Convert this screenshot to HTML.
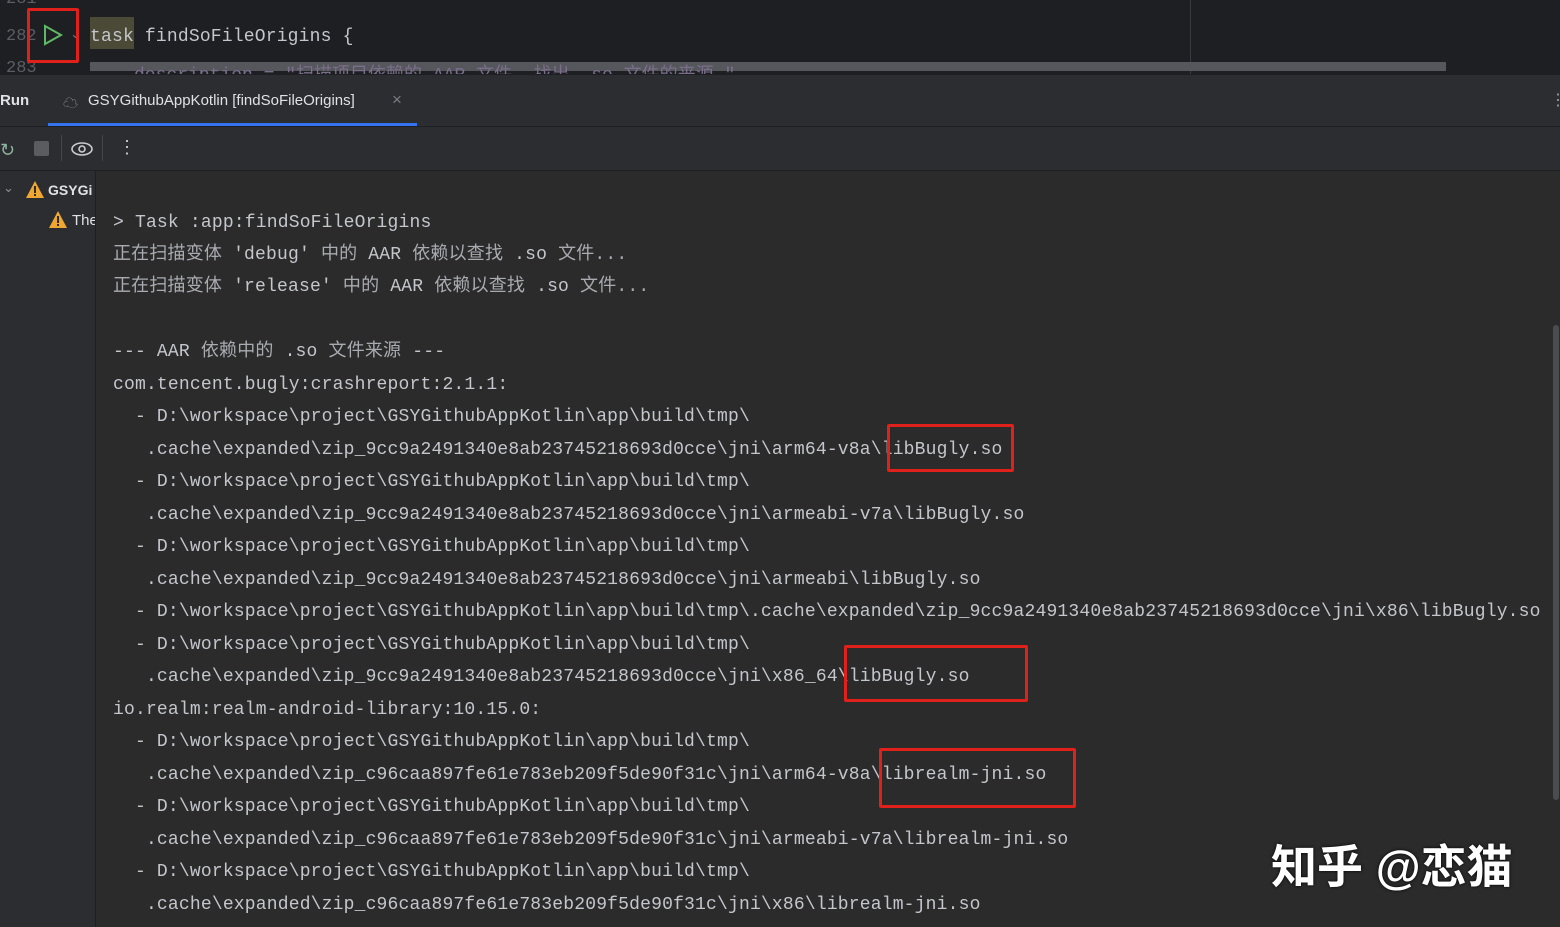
<!DOCTYPE html>
<html><head><meta charset="utf-8"><style>
body{margin:0;width:1560px;height:927px;background:#2b2d30;overflow:hidden;position:relative;font-family:"Liberation Sans","Noto Sans CJK SC",sans-serif}
.ed{position:absolute;left:0;top:0;width:1560px;height:74px;background:#1e1f22}
.mono{font-family:"Liberation Mono","Noto Sans CJK SC",monospace}
.ln{position:absolute;left:6px;color:#5a5d63;font-size:17px}
.con{position:absolute;left:96px;top:171px;width:1464px;height:756px;background:#2b2b2b}
.line{position:absolute;left:113px;font-size:18px;letter-spacing:0.18px;color:#c4c6cc;white-space:pre;line-height:20px}
.rb{position:absolute;border:3px solid #e0201a;border-radius:2px}
.cj{color:#a9abb0}
</style></head><body>
<div class="ed">
 <div class="ln mono" style="top:-10px">281</div>
 <div class="ln mono" style="top:27px">282</div>
 <div class="ln mono" style="top:59px">283</div>
 <div style="position:absolute;left:1190px;top:0;width:1px;height:74px;background:#393b40"></div>
 <svg style="position:absolute;left:42px;top:24px" width="22" height="22"><path d="M3 2 L19 11 L3 20 Z" fill="none" stroke="#5fb865" stroke-width="2"/></svg>
 <div style="position:absolute;left:70px;top:26px;color:#6f737a;font-size:13px">⌄</div>
 <div style="position:absolute;left:90px;top:17px;width:44px;height:32px;background:#4a4a36"></div>
 <div class="mono" style="position:absolute;left:90px;top:27px;font-size:18px;letter-spacing:0.18px;color:#c4c6cc;white-space:pre">task findSoFileOrigins {</div>
 <div style="position:absolute;left:90px;top:62px;width:1356px;height:9px;background:#55575c"></div>
 <div class="mono" style="position:absolute;left:134px;top:60px;font-size:18px;color:#7a6e8a;white-space:pre;height:14px;overflow:hidden">description = "扫描项目依赖的 AAR 文件, 找出 .so 文件的来源."</div>
</div>
<div style="position:absolute;left:0;top:74px;width:1560px;height:1px;background:#1e1f22"></div>
<div style="position:absolute;left:0;top:92px;font-size:15px;font-weight:bold;color:#dfe1e5">Run</div>
<div style="position:absolute;left:63px;top:92px;font-size:15px;color:#8c8f94">☁</div>
<div style="position:absolute;left:88px;top:92px;font-size:15px;color:#dfe1e5">GSYGithubAppKotlin [findSoFileOrigins]</div>
<div style="position:absolute;left:392px;top:90px;font-size:17px;color:#7a7d82">×</div>
<div style="position:absolute;left:48px;top:123px;width:369px;height:3px;background:#3574f0"></div>
<div style="position:absolute;left:1550px;top:90px;color:#9da0a8;font-size:16px">⋮</div>
<div style="position:absolute;left:0;top:126px;width:1560px;height:1px;background:#1e1f22"></div>
<div style="position:absolute;left:0;top:140px;color:#8fb5a0;font-size:18px">↻</div>
<div style="position:absolute;left:34px;top:141px;width:15px;height:15px;background:#5a5c60;border-radius:2px"></div>
<div style="position:absolute;left:61px;top:135px;width:1px;height:26px;background:#44464a"></div>
<svg style="position:absolute;left:71px;top:139px" width="24" height="20"><ellipse cx="11" cy="10" rx="10" ry="6" fill="none" stroke="#c9cbd0" stroke-width="1.6"/><circle cx="11" cy="10" r="3" fill="none" stroke="#c9cbd0" stroke-width="1.6"/></svg>
<div style="position:absolute;left:102px;top:135px;width:1px;height:26px;background:#44464a"></div>
<div style="position:absolute;left:118px;top:137px;color:#c9cbd0;font-size:18px">⋮</div>
<div style="position:absolute;left:0;top:170px;width:1560px;height:1px;background:#1e1f22"></div>
<div style="position:absolute;left:3px;top:180px;color:#8c8f94;font-size:13px">⌄</div>
<svg style="position:absolute;left:25px;top:180px" width="20" height="19"><path d="M10 1 L19 18 L1 18 Z" fill="#f0a732"/><rect x="9" y="6" width="2" height="7" fill="#2b2d30"/><rect x="9" y="14" width="2" height="2" fill="#2b2d30"/></svg>
<div style="position:absolute;left:48px;top:182px;color:#dfe1e5;font-size:14px;font-weight:bold;width:46px;overflow:hidden">GSYGi</div>
<svg style="position:absolute;left:48px;top:210px" width="20" height="19"><path d="M10 1 L19 18 L1 18 Z" fill="#f0a732"/><rect x="9" y="6" width="2" height="7" fill="#2b2d30"/><rect x="9" y="14" width="2" height="2" fill="#2b2d30"/></svg>
<div style="position:absolute;left:72px;top:212px;color:#dfe1e5;font-size:15px;width:23px;overflow:hidden">The</div>
<div class="con"></div>
<div style="position:absolute;left:95px;top:171px;width:1px;height:756px;background:#1e1f22"></div>
<div style="position:absolute;left:1553px;top:325px;width:6px;height:475px;background:#4a4c50;border-radius:3px"></div>
<div class="mono">
<div class="line" style="top:213px">&gt; Task :app:findSoFileOrigins</div>
<div class="line" style="top:245px"><span class="cj">正在扫描变体</span> 'debug' <span class="cj">中的</span> AAR <span class="cj">依赖以查找</span> .so <span class="cj">文件...</span></div>
<div class="line" style="top:277px"><span class="cj">正在扫描变体</span> 'release' <span class="cj">中的</span> AAR <span class="cj">依赖以查找</span> .so <span class="cj">文件...</span></div>
<div class="line" style="top:342px">--- AAR <span class="cj">依赖中的</span> .so <span class="cj">文件来源</span> ---</div>
<div class="line" style="top:375px">com.tencent.bugly:crashreport:2.1.1:</div>
<div class="line" style="top:407px">  - D:\workspace\project\GSYGithubAppKotlin\app\build\tmp\</div>
<div class="line" style="top:440px">   .cache\expanded\zip_9cc9a2491340e8ab23745218693d0cce\jni\arm64-v8a\libBugly.so</div>
<div class="line" style="top:472px">  - D:\workspace\project\GSYGithubAppKotlin\app\build\tmp\</div>
<div class="line" style="top:505px">   .cache\expanded\zip_9cc9a2491340e8ab23745218693d0cce\jni\armeabi-v7a\libBugly.so</div>
<div class="line" style="top:537px">  - D:\workspace\project\GSYGithubAppKotlin\app\build\tmp\</div>
<div class="line" style="top:570px">   .cache\expanded\zip_9cc9a2491340e8ab23745218693d0cce\jni\armeabi\libBugly.so</div>
<div class="line" style="top:602px">  - D:\workspace\project\GSYGithubAppKotlin\app\build\tmp\.cache\expanded\zip_9cc9a2491340e8ab23745218693d0cce\jni\x86\libBugly.so</div>
<div class="line" style="top:635px">  - D:\workspace\project\GSYGithubAppKotlin\app\build\tmp\</div>
<div class="line" style="top:667px">   .cache\expanded\zip_9cc9a2491340e8ab23745218693d0cce\jni\x86_64\libBugly.so</div>
<div class="line" style="top:700px">io.realm:realm-android-library:10.15.0:</div>
<div class="line" style="top:732px">  - D:\workspace\project\GSYGithubAppKotlin\app\build\tmp\</div>
<div class="line" style="top:765px">   .cache\expanded\zip_c96caa897fe61e783eb209f5de90f31c\jni\arm64-v8a\librealm-jni.so</div>
<div class="line" style="top:797px">  - D:\workspace\project\GSYGithubAppKotlin\app\build\tmp\</div>
<div class="line" style="top:830px">   .cache\expanded\zip_c96caa897fe61e783eb209f5de90f31c\jni\armeabi-v7a\librealm-jni.so</div>
<div class="line" style="top:862px">  - D:\workspace\project\GSYGithubAppKotlin\app\build\tmp\</div>
<div class="line" style="top:895px">   .cache\expanded\zip_c96caa897fe61e783eb209f5de90f31c\jni\x86\librealm-jni.so</div>
</div>
<div class="rb" style="left:27px;top:8px;width:46px;height:49px"></div>
<div class="rb" style="left:887px;top:424px;width:121px;height:42px"></div>
<div class="rb" style="left:844px;top:645px;width:178px;height:51px"></div>
<div class="rb" style="left:879px;top:748px;width:191px;height:54px"></div>
<div style="position:absolute;left:1271px;top:831px;font-size:46px;font-weight:bold;color:#fff;white-space:nowrap;text-shadow:0 0 3px #000">知乎 @恋猫</div>
</body></html>
